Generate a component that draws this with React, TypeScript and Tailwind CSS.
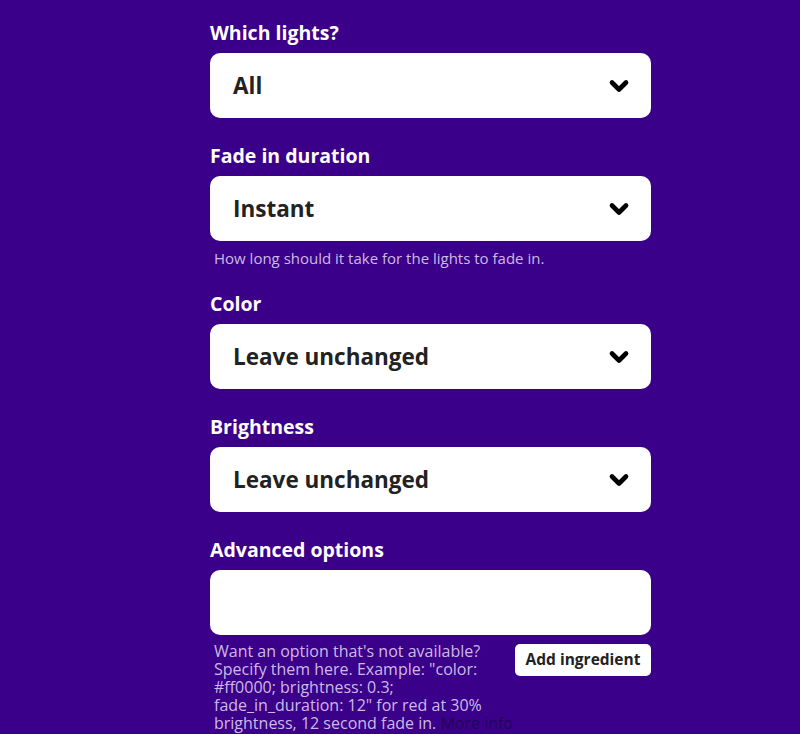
import { ChevronDown } from "lucide-react";

const font = { fontFamily: "'Open Sans', 'Noto Sans', sans-serif" };

const SelectField = ({ label, value, help }: { label: string; value: string; help?: string }) => (
  <div className={help ? "mb-[24px]" : "mb-[26px]"}>
    <label className="block text-[19.5px] leading-6 font-bold text-white mb-2">{label}</label>
    <div className="h-[65px] bg-white rounded-[10px] flex items-center justify-between pl-[23px] pr-[18px]">
      <span className="text-[22.5px] font-bold text-[#222]">{value}</span>
      <ChevronDown size={28} strokeWidth={4} className="text-black" />
    </div>
    {help && <p className="mt-[7px] ml-1 text-[15px] leading-5 text-[#cbbbe6]">{help}</p>}
  </div>
);

const helpLines = [
  "Want an option that's not available?",
  'Specify them here. Example: "color:',
  "#ff0000; brightness: 0.3;",
  'fade_in_duration: 12" for red at 30%',
];

export default function App() {
  return (
    <div className="w-[800px] h-[734px] bg-[#3b0089] overflow-hidden" style={font}>
      <div className="ml-[210px] w-[441px] pt-[21px]">
        <SelectField label="Which lights?" value="All" />
        <SelectField
          label="Fade in duration"
          value="Instant"
          help="How long should it take for the lights to fade in."
        />
        <SelectField label="Color" value="Leave unchanged" />
        <SelectField label="Brightness" value="Leave unchanged" />
        <div>
          <label className="block text-[19.5px] leading-6 font-bold text-white mb-2">Advanced options</label>
          <div className="h-[65px] bg-white rounded-[10px]" />
          <div className="flex justify-between mt-[7px]">
            <div className="flex-1 min-w-0 ml-1 whitespace-nowrap text-[16px] leading-[18px] text-[#cbbbe6]">
              {helpLines.map((l) => (
                <div key={l}>{l}</div>
              ))}
              <div>
                brightness, 12 second fade in. <span className="text-[#22005a]">More info</span>
              </div>
            </div>
            <button className="shrink-0 h-[32px] w-[136px] bg-white rounded-[5px] text-[15.5px] font-bold text-[#222] mt-[2px]">
              Add ingredient
            </button>
          </div>
        </div>
      </div>
    </div>
  );
}
